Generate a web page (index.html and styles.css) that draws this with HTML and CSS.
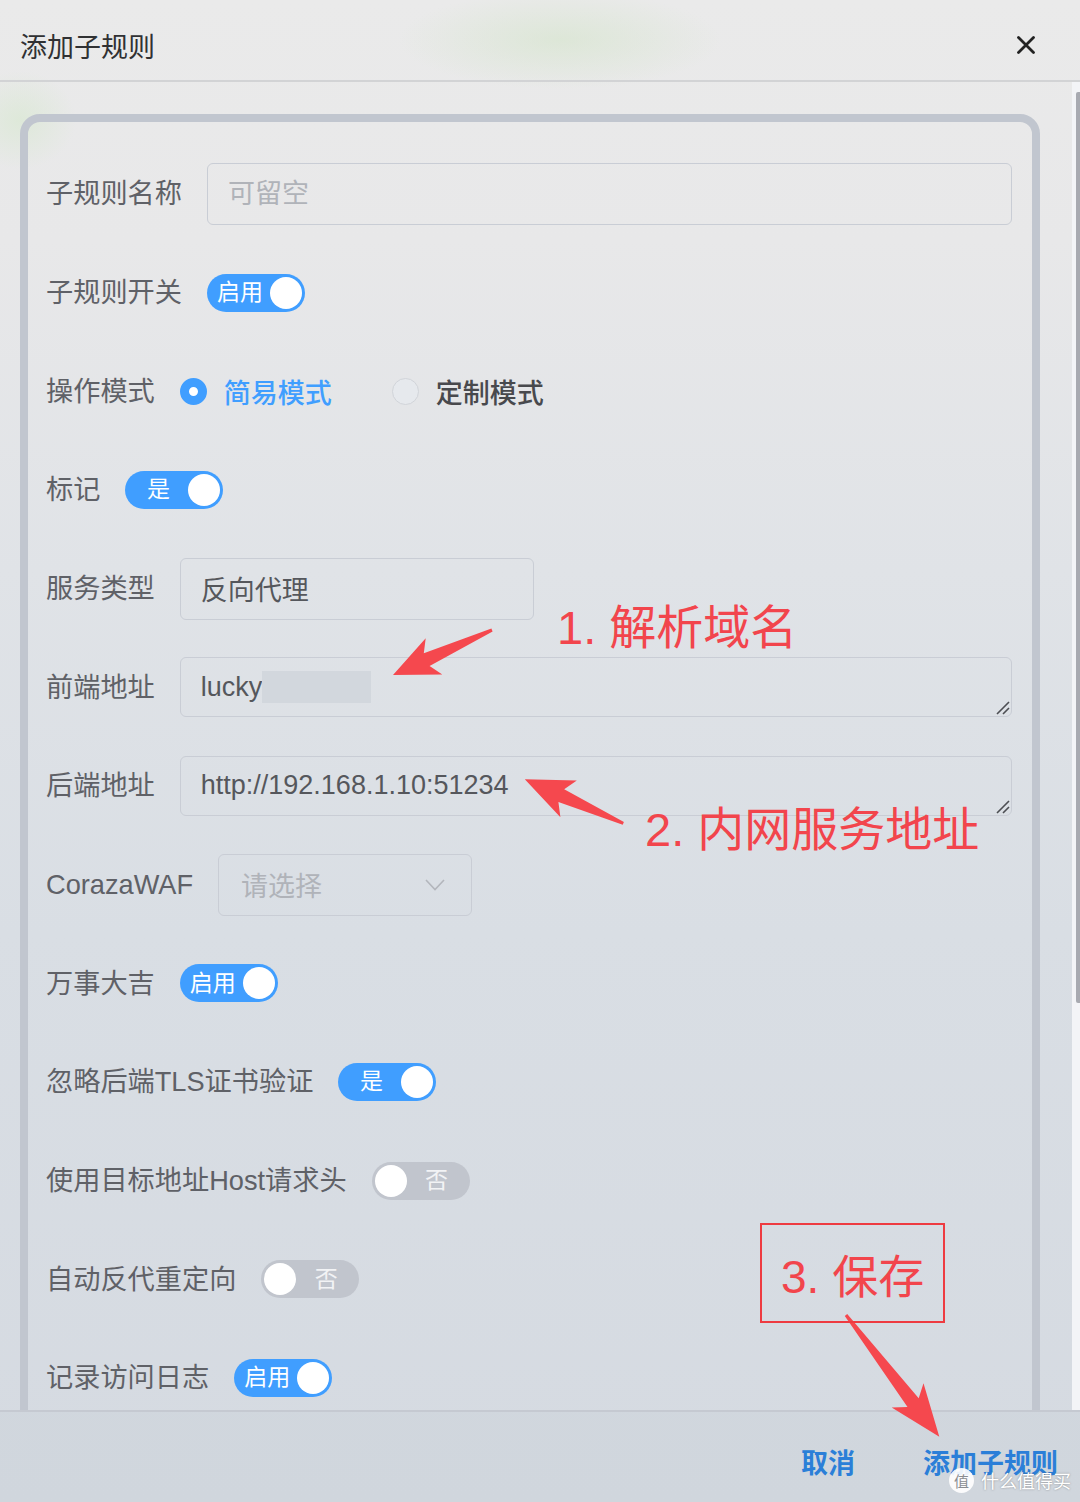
FILE: index.html
```html
<!DOCTYPE html>
<html lang="zh-CN">
<head>
    <meta charset="UTF-8">
    <meta name="viewport" content="width=device-width, initial-scale=1.0">
    <title>添加子规则</title>
    <link rel="stylesheet" href="styles.css">
</head>
<body>
    <div class="dialog">
        <div class="dialog-header">
            <span class="dialog-title">添加子规则</span>
            <button class="close-btn" aria-label="关闭">
                <svg width="18" height="18" viewBox="0 0 18 18"><path d="M1.5 1.5 L16.5 16.5 M16.5 1.5 L1.5 16.5" stroke="#222" stroke-width="2.8" stroke-linecap="round"/></svg>
            </button>
        </div>

        <div class="dialog-body">
            <div class="body-scroll">
                <div class="rule-card">
                    <div class="form-item">
                        <label class="form-label">子规则名称</label>
                        <input class="text-input wide" type="text" placeholder="可留空">
                    </div>
                    <div class="form-item">
                        <label class="form-label">子规则开关</label>
                        <span class="switch on"><span class="switch-text">启用</span><span class="knob"></span></span>
                    </div>
                    <div class="form-item">
                        <label class="form-label">操作模式</label>
                        <span class="radio checked"><span class="radio-dot"></span>简易模式</span>
                        <span class="radio"><span class="radio-dot"></span>定制模式</span>
                    </div>
                    <div class="form-item">
                        <label class="form-label">标记</label>
                        <span class="switch on"><span class="switch-text">是</span><span class="knob"></span></span>
                    </div>
                    <div class="form-item">
                        <label class="form-label">服务类型</label>
                        <input class="text-input service" type="text" value="反向代理" readonly>
                    </div>
                    <div class="form-item">
                        <label class="form-label">前端地址</label>
                        <div class="textarea">lucky<span class="redacted"></span>
                            <svg class="resizer" width="14" height="14" viewBox="0 0 14 14"><path d="M1 13 L13 1 M7 13 L13 7" stroke="#4d4f53" stroke-width="1.6"/></svg>
                        </div>
                    </div>
                    <div class="form-item">
                        <label class="form-label">后端地址</label>
                        <div class="textarea">http://192.168.1.10:51234
                            <svg class="resizer" width="14" height="14" viewBox="0 0 14 14"><path d="M1 13 L13 1 M7 13 L13 7" stroke="#4d4f53" stroke-width="1.6"/></svg>
                        </div>
                    </div>
                    <div class="form-item">
                        <label class="form-label">CorazaWAF</label>
                        <div class="select">
                            <span class="placeholder">请选择</span>
                            <svg width="20" height="12" viewBox="0 0 20 12"><path d="M1 1 L10 10.5 L19 1" fill="none" stroke="#b3b6bc" stroke-width="1.6"/></svg>
                        </div>
                    </div>
                    <div class="form-item">
                        <label class="form-label">万事大吉</label>
                        <span class="switch on"><span class="switch-text">启用</span><span class="knob"></span></span>
                    </div>
                    <div class="form-item">
                        <label class="form-label">忽略后端TLS证书验证</label>
                        <span class="switch on"><span class="switch-text">是</span><span class="knob"></span></span>
                    </div>
                    <div class="form-item">
                        <label class="form-label">使用目标地址Host请求头</label>
                        <span class="switch off"><span class="knob"></span><span class="switch-text">否</span></span>
                    </div>
                    <div class="form-item">
                        <label class="form-label">自动反代重定向</label>
                        <span class="switch off"><span class="knob"></span><span class="switch-text">否</span></span>
                    </div>
                    <div class="form-item">
                        <label class="form-label">记录访问日志</label>
                        <span class="switch on"><span class="switch-text">启用</span><span class="knob"></span></span>
                    </div>
                </div>
            </div>
            <div class="scrollbar"><div class="scrollbar-thumb"></div></div>
        </div>

        <div class="dialog-footer">
            <button class="footer-btn">取消</button>
            <button class="footer-btn">添加子规则</button>
        </div>
    </div>

    <!-- red screenshot annotations -->
    <div class="annotations">
        <svg class="arrows" width="1080" height="1502" viewBox="0 0 1080 1502">
            <polygon points="393,675 425.7,638.2 423.8,653.3 491.4,628.6 492.6,631.4 429.6,666.1 442.3,674.6"/>
            <polygon points="524.8,779.3 576.8,780.6 564.2,789.2 623.9,821.9 622.7,824.7 558.4,802 560.4,817.2"/>
            <polygon points="939.3,1436.7 891.7,1407.6 907.5,1406.9 844.8,1315.9 847.2,1314.1 918.7,1398.3 923.5,1383.2"/>
        </svg>
        <span class="note note-1">1. 解析域名</span>
        <span class="note note-2">2. 内网服务地址</span>
        <span class="note-box">3. 保存</span>
    </div>

    <div class="watermark">
        <span class="wm-logo">值</span>
        <span class="wm-text">什么值得买</span>
    </div>
</body>
</html>
```

FILE: styles.css
```css
* {
    box-sizing: border-box;
}
body {
    margin: 0;
    width: 1080px;
    height: 1502px;
    overflow: hidden;
    position: relative;
    font-family: "Liberation Sans", "Noto Sans CJK SC", sans-serif;
    color: #5f6167;
    background:
        radial-gradient(ellipse 230px 70px at 560px 40px, rgba(210, 228, 200, 0.55), transparent 70%),
        radial-gradient(ellipse 80px 70px at 20px 120px, rgba(214, 232, 206, 0.6), transparent 70%),
        linear-gradient(180deg, #eaeaea 0%, #e8e8e9 16%, #e0e3e7 38%, #d9dee4 62%, #d5dae1 100%);
}
.dialog {
    display: flex;
    flex-direction: column;
    height: 1502px;
}
.dialog-header {
    height: 82px;
    padding: 10px 45px 0 20px;
    display: flex;
    align-items: center;
    justify-content: space-between;
    border-bottom: 2px solid #d2d3d5;
}
.dialog-title {
    font-size: 27px;
    color: #303133;
}
.close-btn {
    border: none;
    background: none;
    padding: 0;
    width: 18px;
    height: 18px;
    display: flex;
}
.dialog-body {
    height: 1328px;
    display: flex;
    overflow: hidden;
}
.body-scroll {
    flex: 1;
    overflow: hidden;
}
.scrollbar {
    width: 8px;
    background: #f3f4f7;
    padding: 10px 0 0 4px;
}
.scrollbar-thumb {
    width: 4px;
    height: 911px;
    background: #a8aab1;
    border-radius: 2px 0 0 2px;
}
.rule-card {
    margin: 32px 32px 0 20px;
    border: 8px solid #c1c6cf;
    border-radius: 20px;
    padding: 41px 20px 80px 18px;
    display: flex;
    flex-direction: column;
    gap: 36.67px;
}
.form-item {
    height: 62px;
    display: flex;
    align-items: center;
    gap: 25px;
}
.form-label {
    font-size: 27.2px;
    line-height: 1;
    white-space: nowrap;
    color: #5f6167;
}
.text-input {
    height: 62px;
    border: 1.5px solid #c9cdd5;
    border-radius: 6px;
    background: transparent;
    padding: 0 20px;
    font-family: "Liberation Sans", "Noto Sans CJK SC", sans-serif;
    font-size: 27px;
    color: #55575c;
    outline: none;
}
.text-input::placeholder {
    color: #b0b3b9;
}
.text-input.wide {
    flex: 1;
}
.text-input.service {
    width: 354px;
}
.textarea {
    flex: 1;
    height: 60px;
    border: 1.5px solid #c9cdd5;
    border-radius: 6px;
    padding: 0 20px;
    display: flex;
    align-items: center;
    font-size: 27px;
    color: #55575c;
    position: relative;
}
.resizer {
    position: absolute;
    right: 1px;
    bottom: 1px;
}
.redacted {
    display: inline-block;
    width: 109px;
    height: 32px;
    background: #d2d7dd;
}
.select {
    width: 254px;
    height: 62px;
    border: 1.5px solid #c9cdd5;
    border-radius: 6px;
    padding: 0 26px 0 22px;
    display: flex;
    align-items: center;
    justify-content: space-between;
}
.placeholder {
    font-size: 27px;
    color: #b0b3b9;
}
.switch {
    width: 98px;
    height: 38px;
    border-radius: 19px;
    padding: 0 3px;
    display: flex;
    align-items: center;
    font-size: 23px;
    color: #fff;
}
.switch.on {
    background: #409eff;
}
.switch.off {
    background: #c1c5cd;
}
.switch-text {
    flex: 1;
    text-align: center;
    line-height: 1;
}
.switch.off .switch-text {
    color: #f2f3f5;
}
.knob {
    width: 32px;
    height: 32px;
    border-radius: 50%;
    background: #fff;
}
.radio {
    display: flex;
    align-items: center;
    gap: 17px;
    font-size: 27px;
    font-weight: 500;
    color: #48494d;
    margin-right: 35px;
}
.radio.checked {
    color: #409eff;
}
.radio-dot {
    width: 27px;
    height: 27px;
    border-radius: 50%;
    border: 1.5px solid #d1d4d9;
    background: #e6e9ed;
}
.radio.checked .radio-dot {
    border: 9.5px solid #409eff;
    background: #fff;
}
.dialog-footer {
    flex: 1;
    border-top: 2px solid #c5c9d1;
    background: rgba(196, 202, 212, 0.25);
    padding: 8px 22px 0 0;
    display: flex;
    align-items: center;
    justify-content: flex-end;
    gap: 68px;
}
.footer-btn {
    border: none;
    background: none;
    padding: 0;
    font-family: "Liberation Sans", "Noto Sans CJK SC", sans-serif;
    font-size: 27px;
    font-weight: 700;
    color: #2b7fd8;
}
.annotations {
    position: absolute;
    inset: 0;
    pointer-events: none;
}
.arrows {
    position: absolute;
    left: 0;
    top: 0;
}
.arrows polygon {
    fill: #f5484e;
}
.note {
    position: absolute;
    font-size: 47px;
    line-height: 47px;
    color: #f2454c;
    white-space: nowrap;
}
.note-1 {
    left: 557px;
    top: 604px;
}
.note-2 {
    left: 645px;
    top: 806px;
}
.note-box {
    position: absolute;
    left: 760px;
    top: 1223px;
    width: 185px;
    height: 100px;
    border: 2px solid #ee3b41;
    padding-left: 19px;
    display: flex;
    align-items: center;
    font-size: 46px;
    color: #f2454c;
    white-space: nowrap;
}
.watermark {
    position: absolute;
    left: 949px;
    top: 1467px;
    display: flex;
    align-items: center;
    gap: 7px;
}
.wm-logo {
    width: 25px;
    height: 25px;
    border-radius: 50%;
    background: rgba(255, 255, 255, 0.9);
    color: #8a8d92;
    font-size: 15px;
    display: flex;
    align-items: center;
    justify-content: center;
}
.wm-text {
    font-size: 18px;
    color: #fff;
    text-shadow: 0 0 2px rgba(80, 80, 80, 0.6);
}
```
